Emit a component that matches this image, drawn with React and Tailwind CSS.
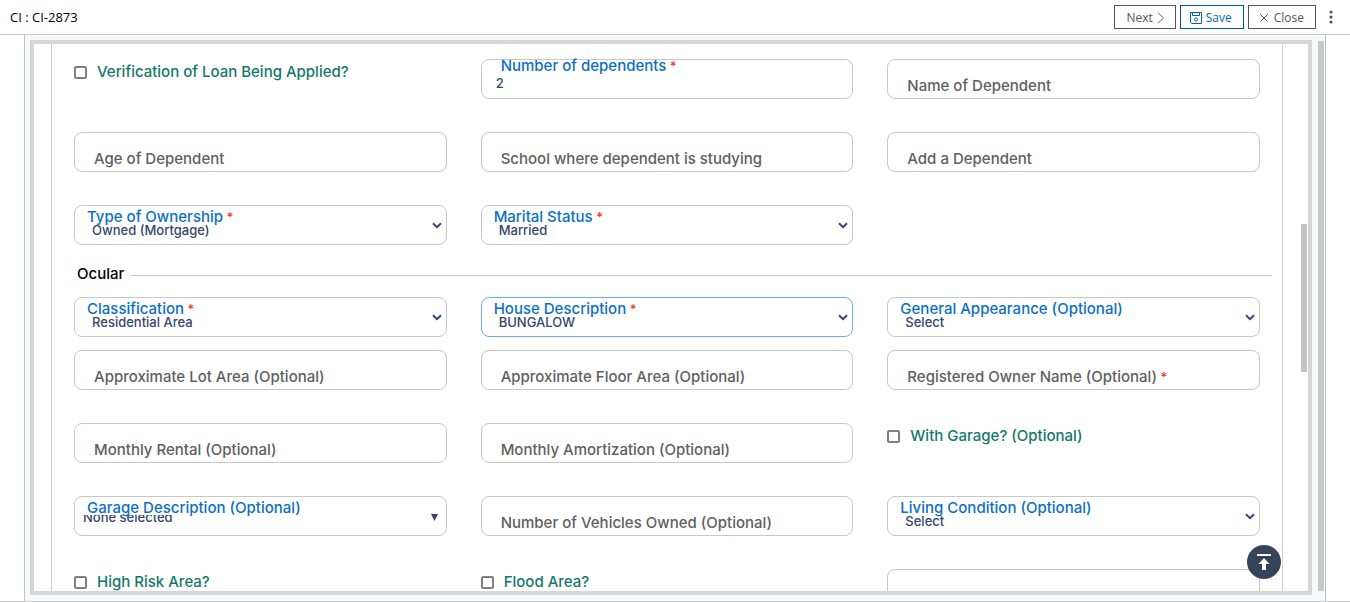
import { useId } from "react";

const BOX = "h-10 w-full rounded-lg border bg-white outline-none";
const VALUE = "text-[13px] font-medium text-[#34466b]";
const LABEL = "pointer-events-none absolute text-[15px] leading-4 font-medium whitespace-nowrap";

function Star() {
  return <span className="text-[13px] text-[#f0352b]"> *</span>;
}

function TextField({ label, value, required }) {
  const id = useId();
  return (
    <div className="relative h-10">
      <input
        id={id}
        type="text"
        defaultValue={value}
        className={`${BOX} ${VALUE} border-[#c8c8c8] pt-2 pr-4 pl-3.5`}
      />
      <label
        htmlFor={id}
        className={`${LABEL} left-5 ${value ? "-top-px text-[#0b6fc7]" : "top-[19px] text-[#606060]"}`}
      >
        {label}
        {required && <Star />}
      </label>
    </div>
  );
}

function SelectField({ label, value, required, active }) {
  const id = useId();
  return (
    <div className="relative h-10">
      <select
        id={id}
        defaultValue={value}
        className={`${BOX} ${VALUE} appearance-none pt-[11px] pr-8 pl-[17px] ${
          active ? "border-[#66afe9]" : "border-[#c8c8c8]"
        }`}
      >
        <option>{value}</option>
      </select>
      <label htmlFor={id} className={`${LABEL} top-1 left-[13px] text-[#0b6fc7]`}>
        {label}
        {required && <Star />}
      </label>
      <svg
        viewBox="0 0 10 7"
        className="pointer-events-none absolute top-[17px] right-[5px] h-[7px] w-2.5"
        fill="none"
        stroke="#34466b"
        strokeWidth="2"
      >
        <path d="M1 1.2 5 5.2 9 1.2" />
      </svg>
    </div>
  );
}

function MultiSelectField({ label, value }) {
  const id = useId();
  return (
    <div className="relative h-10">
      <button
        id={id}
        type="button"
        className={`${BOX} ${VALUE} flex items-center border-[#c8c8c8] pr-2 pl-2 text-left`}
      >
        <span className="mt-1 flex h-[7px] flex-1 items-end overflow-hidden whitespace-nowrap">
          <span className="block leading-[10px]">{value}</span>
        </span>
        <svg viewBox="0 0 7 7" className="mt-0.5 h-[7px] w-[7px]" fill="#34466b">
          <path d="M0 0h7L3.5 7z" />
        </svg>
      </button>
      <label htmlFor={id} className={`${LABEL} top-1 left-[13px] text-[#0b6fc7]`}>
        {label}
      </label>
    </div>
  );
}

function CheckField({ label }) {
  return (
    <label className="flex h-[27px] items-center gap-2.5 text-[15px] leading-4 font-medium whitespace-nowrap text-[#12796a]">
      <input
        type="checkbox"
        className="h-[13px] w-[13px] shrink-0 appearance-none rounded-[2px] border-2 border-[#808080] bg-white"
      />
      <span className="pb-px">{label}</span>
    </label>
  );
}

const GRID = "grid grid-cols-3 items-start gap-x-[34px] gap-y-[33px]";

export default function App() {
  return (
    <div className="flex h-screen flex-col overflow-hidden border-b border-[#cccccc] bg-white">
      <header className="flex h-[35px] shrink-0 items-center border-b border-[#cccccc] pr-[15px] pl-2.5 font-['Open_Sans',sans-serif]">
        <h1 className="flex-1 pt-0.5 text-[13px] text-black">CI : CI-2873</h1>
        <div className="flex items-center gap-[3px] text-[12px]">
          <button
            type="button"
            className="mr-px flex h-6 items-center gap-1 border border-[#555555] pt-0.5 pr-2.5 pl-[11px] text-[#555555]"
          >
            Next
            <svg viewBox="0 0 8 12" className="h-3 w-2" fill="none" stroke="#666666">
              <path d="M1 .8 6.5 6 1 11.2" />
            </svg>
          </button>
          <button
            type="button"
            className="mr-px flex h-6 items-center gap-1 border border-[#005a9c] pt-0.5 pr-[11px] pl-[9px] text-[#0067b1]"
          >
            <svg viewBox="0 0 12 12" className="h-3 w-3" fill="none" stroke="#0067b1">
              <path d="M.5.5h11v11H1.500L.5 10.500zM2.500.5v3h7v-3" />
              <circle cx="6" cy="7.500" r="1.500" />
            </svg>
            Save
          </button>
          <button
            type="button"
            className="flex h-6 items-center gap-1.5 border border-[#555555] pt-0.5 pr-[11px] pl-[11px] text-[#555555]"
          >
            <svg viewBox="0 0 8 8" className="h-2 w-2" fill="none" stroke="#555555">
              <path d="M.3.3 7.700 7.700M7.700.3.3 7.700" />
            </svg>
            Close
          </button>
          <button type="button" aria-label="More" className="ml-2 flex h-6 w-2 items-center justify-center">
            <svg viewBox="0 0 4 14" className="h-3.5 w-1" fill="#555555">
              <circle cx="2" cy="2" r="1.600" />
              <circle cx="2" cy="7" r="1.600" />
              <circle cx="2" cy="12" r="1.600" />
            </svg>
          </button>
        </div>
      </header>

      <main className="mr-6 ml-6 flex min-h-0 flex-1 gap-1.5 border-x border-[#c4c4c4] bg-[#f7f8fa] pt-[5px] pr-px pb-1.5 pl-[5px] font-[Inter,sans-serif]">
        <div className="relative flex min-w-0 flex-1 border-4 border-[#d6d6d6] bg-white pl-[17px]">
          <form className="min-w-0 flex-1 overflow-hidden border-x border-[#cccccc] pt-[15px] pr-[22px] pl-[22px]">
            <div className={GRID}>
              <CheckField label="Verification of Loan Being Applied?" />
              <TextField label="Number of dependents" value="2" required />
              <TextField label="Name of Dependent" />
              <TextField label="Age of Dependent" />
              <TextField label="School where dependent is studying" />
              <TextField label="Add a Dependent" />
              <SelectField label="Type of Ownership" value="Owned (Mortgage)" required />
              <SelectField label="Marital Status" value="Married" required />
            </div>

            <h2 className="-mr-3 ml-[3px] flex h-[52px] items-center gap-[7px] pt-1.5 text-[15px] font-medium text-black">
              Ocular
              <span className="mt-0.5 h-px flex-1 bg-[#c8c8c8]" />
            </h2>

            <div className={`${GRID} mb-[13px]`}>
              <SelectField label="Classification" value="Residential Area" required />
              <SelectField label="House Description" value="BUNGALOW" required active />
              <SelectField label="General Appearance (Optional)" value="Select" />
            </div>
            <div className={GRID}>
              <TextField label="Approximate Lot Area (Optional)" />
              <TextField label="Approximate Floor Area (Optional)" />
              <TextField label="Registered Owner Name (Optional)" required />
              <TextField label="Monthly Rental (Optional)" />
              <TextField label="Monthly Amortization (Optional)" />
              <CheckField label="With Garage? (Optional)" />
              <MultiSelectField label="Garage Description (Optional)" value="None selected" />
              <TextField label="Number of Vehicles Owned (Optional)" />
              <SelectField label="Living Condition (Optional)" value="Select" />
              <CheckField label="High Risk Area?" />
              <CheckField label="Flood Area?" />
              <input type="text" aria-label="Details" className={`${BOX} border-[#c8c8c8] px-4`} />
            </div>
          </form>
          <div className="flex w-[25px] shrink-0 justify-end pr-px">
            <div className="mt-[180px] h-[148px] w-1.5 bg-[#c4c4c4]" />
          </div>
          <button
            type="button"
            aria-label="Back to top"
            className="absolute right-[27px] bottom-3 flex h-[34px] w-[34px] items-center justify-center rounded-full bg-[#34445a]"
          >
            <svg viewBox="0 0 14 16" className="h-4 w-3.5" fill="#ffffff">
              <path d="M0 0h14v2H0zM7 4l5.500 6H9v6H5v-6H1.500z" />
            </svg>
          </button>
        </div>
        <div className="mt-px mb-1 w-1.5 shrink-0 bg-[#c8c8c8]" />
      </main>
    </div>
  );
}
